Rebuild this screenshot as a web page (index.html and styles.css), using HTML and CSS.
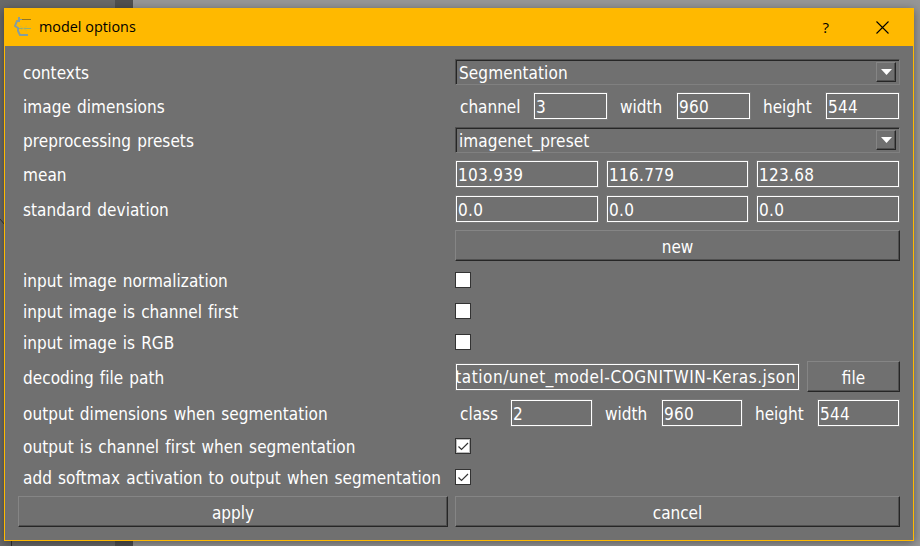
FILE: index.html
```html
<!DOCTYPE html>
<html lang="en">
<head>
<meta charset="utf-8">
<title>model options</title>
<link rel="stylesheet" href="styles.css">
</head>
<body>
<div class="desktop">
  <svg class="backdrop" width="920" height="546" viewBox="0 0 920 546" aria-hidden="true">
    <rect width="920" height="546" fill="#969696"/>
    <rect width="115" height="546" fill="#696969"/>
    <rect x="115" width="18" height="546" fill="#505050"/>
    <path d="M0 219l5 6M11.500 540v6" stroke="#333" fill="none"/>
  </svg>
  <main class="window">
    <header class="titlebar">
      <svg class="logo" width="18" height="20" viewBox="0 0 18 20" aria-hidden="true">
        <path d="M5 0V4H3L1 9L4 11V14L6 18H14" stroke="#849ea0" stroke-width="2" fill="none"/>
        <path d="M5 2.500H8" stroke="#849ea0"/>
        <path d="M8 2.500H17" stroke="#98751a" stroke-width="1"/>
        <path d="M5 11.500H17" stroke="#8fae78" fill="none"/>
        <path d="M6 9L13 14M13 9L7 13" stroke="#c9b443" stroke-width=".8" fill="none"/>
      </svg>
      <h1 class="title">model options</h1>
      <span class="help">?</span>
      <svg class="close" width="13" height="13" viewBox="0 0 13 13" aria-label="close"><path d="M.5 .5L12.500 12.500M12.500 .5L.5 12.500" stroke="#000" stroke-width="1.100"/></svg>
    </header>
    <form class="form">
      <div class="label"><span>contexts</span></div>
      <div class="combo"><span>Segmentation</span><i class="drop"><svg width="11" height="6" viewBox="0 0 11 6"><path d="M0 0H11L5.500 6Z" fill="#fff"/></svg></i></div>
      <div class="label"><span>image dimensions</span></div>
      <div class="dims input-dims"><span>channel</span><b class="field">3</b><span>width</span><b class="field">960</b><span>height</span><b class="field">544</b></div>
      <div class="label"><span>preprocessing presets</span></div>
      <div class="combo"><span>imagenet_preset</span><i class="drop"><svg width="11" height="6" viewBox="0 0 11 6"><path d="M0 0H11L5.500 6Z" fill="#fff"/></svg></i></div>
      <div class="label"><span>mean</span></div>
      <div class="triple"><b class="field">103.939</b><b class="field">116.779</b><b class="field">123.68</b></div>
      <div class="label"><span>standard deviation</span></div>
      <div class="triple"><b class="field">0.0</b><b class="field">0.0</b><b class="field">0.0</b></div>
      <div></div>
      <div class="button">new</div>
      <div class="label"><span>input image normalization</span></div>
      <div class="check"><i class="box"></i></div>
      <div class="label"><span>input image is channel first</span></div>
      <div class="check"><i class="box"></i></div>
      <div class="label"><span>input image is RGB</span></div>
      <div class="check"><i class="box"></i></div>
      <div class="label"><span>decoding file path</span></div>
      <div class="path"><b class="field tail"><span>tation/unet_model-COGNITWIN-Keras.json</span></b><div class="button">file</div></div>
      <div class="label"><span>output dimensions when segmentation</span></div>
      <div class="dims output-dims"><span>class</span><b class="field">2</b><span>width</span><b class="field">960</b><span>height</span><b class="field">544</b></div>
      <div class="label"><span>output is channel first when segmentation</span></div>
      <div class="check"><i class="box"><svg width="14" height="14" viewBox="0 0 14 14"><rect x=".5" y=".5" width="13" height="13" fill="none" stroke="#777" stroke-dasharray="1 1"/><path d="M2.500 7.500L5.500 10.500L12 4" fill="none" stroke="#333" stroke-width="1.200"/></svg></i></div>
      <div class="label"><span>add softmax activation to output when segmentation</span></div>
      <div class="check"><i class="box"><svg width="14" height="14" viewBox="0 0 14 14"><path d="M2.500 7.500L5.500 10.500L12 4" fill="none" stroke="#333" stroke-width="1.200"/></svg></i></div>
      <div class="button">apply</div>
      <div class="button">cancel</div>
    </form>
  </main>
</div>
</body>
</html>
```
FILE: styles.css
```css
* { box-sizing: border-box; }
body { margin: 0; }
.desktop {
  position: relative;
  width: 920px;
  height: 546px;
  padding: 8px 6px 5px 4px;
  overflow: hidden;
}
.backdrop { position: absolute; left: 0; top: 0; }
.window {
  position: relative;
  width: 910px;
  height: 533px;
  border: 1px solid #ffb900;
  background: #707070;
  box-shadow: 0 2px 9px rgba(0, 0, 0, .4);
  color: #fff;
  font: 17px/22px "DejaVu Sans Condensed", "DejaVu Sans", sans-serif;
  font-stretch: condensed;
}
.titlebar {
  display: flex;
  align-items: center;
  height: 37px;
  padding: 0 24px 1px 9px;
  background: #ffb900;
  color: #000;
}
.title {
  flex: 1;
  margin: 0 0 0 7px;
  font: 14.4px/20px "Open Sans", sans-serif;
}
.help { font: 15px/20px "Open Sans", sans-serif; margin-right: 47px; }
.form {
  display: grid;
  grid-template-columns: 430px 445px;
  grid-template-rows: 26px 28px 26px 28px 28px 31px 24px 24px 24px 31px 28px 24px 24px 31px;
  gap: 7px;
  padding: 13px;
}
.label {
  display: flex;
  align-items: center;
  padding: 2px 0 0 5px;
  letter-spacing: .05px;
  word-spacing: 1.2px;
  white-space: nowrap;
}
.combo {
  display: flex;
  align-items: center;
  justify-content: space-between;
  border: 1px solid;
  border-color: #505050 #808080 #808080 #505050;
  box-shadow: inset 1px 1px #262626;
  padding: 1px 3px 1px 3px;
}
.combo span { padding-top: 2px; letter-spacing: .1px; }
.drop {
  display: flex;
  align-items: center;
  justify-content: center;
  width: 20px;
  height: 20px;
  border: 1px solid;
  border-color: #858585 #262626 #262626 #858585;
  box-shadow: inset -1px -1px #505050;
}
.field {
  display: block;
  height: 26px;
  padding-left: 1px;
  border: 1px solid #fff;
  outline: 1px solid #7a7a7a;
  font-weight: normal;
  letter-spacing: .3px;
  line-height: 26px;
  white-space: nowrap;
}
.dims, .triple { display: grid; align-items: center; padding: 0 1px; }
.input-dims { grid-template-columns: 78px 73px 70px 73px 76px 73px; }
.output-dims { grid-template-columns: 55px 81px 70px 80px 76px 81px; }
.dims span { padding: 2px 0 0 13px; }
.dims span:first-child { padding-left: 4px; }
.triple { grid-template-columns: 142px 141px 142px; column-gap: 9px; }
.button {
  display: flex;
  align-items: center;
  justify-content: center;
  padding-top: 2px;
  border: 1px solid;
  border-color: #858585 #262626 #262626 #858585;
  box-shadow: inset -1px -1px #505050;
}
.check { display: flex; align-items: center; }
.box {
  display: block;
  width: 16px;
  height: 16px;
  border: 1px solid #333;
  background: #fff;
}
.box svg { display: block; }
.path { display: grid; grid-template-columns: 343px 93px; gap: 8px; padding-left: 1px; }
.path .field { align-self: center; }
.tail {
  display: flex;
  justify-content: flex-end;
  padding: 0 2px 0 0;
  letter-spacing: .54px;
  line-height: 25px;
  overflow: hidden;
}
```
